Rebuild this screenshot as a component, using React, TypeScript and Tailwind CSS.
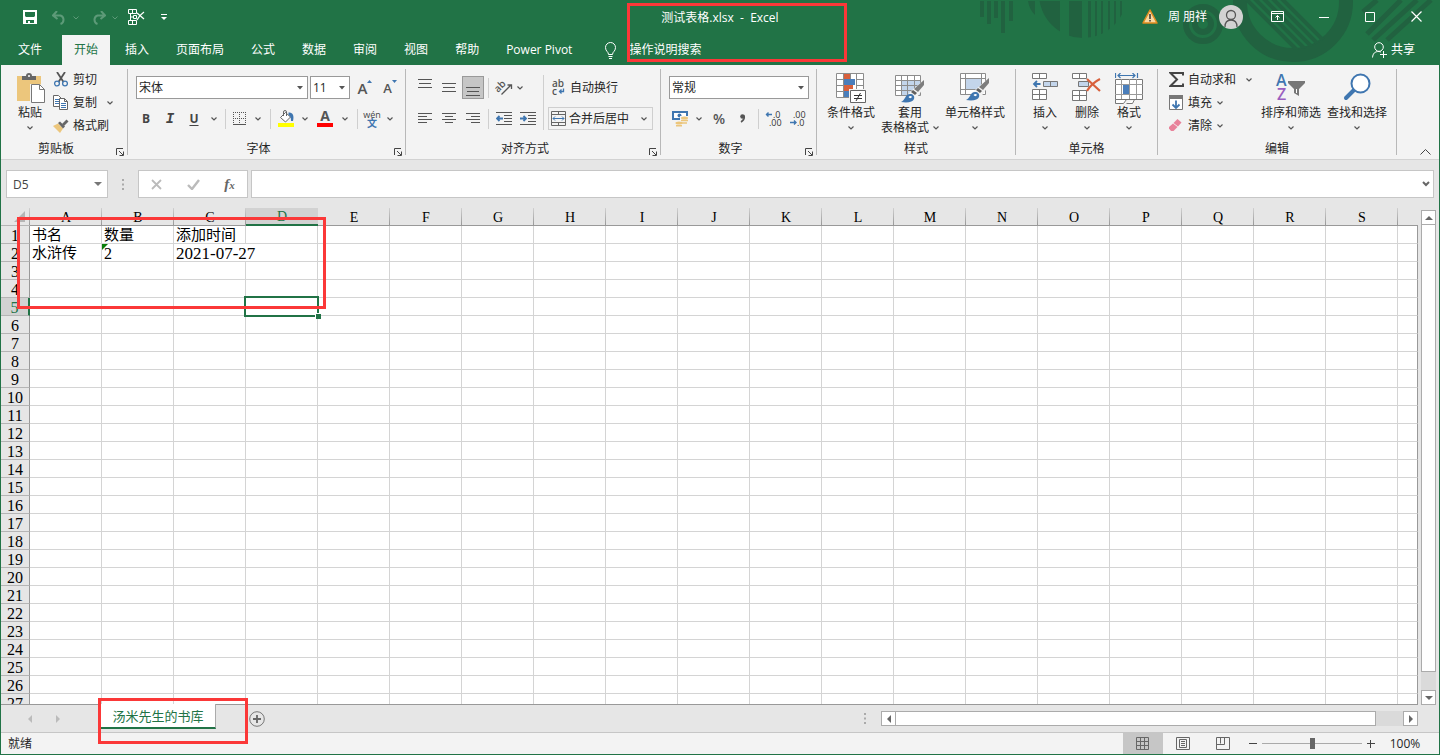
import type { ReactNode } from 'react';
import clsx from 'clsx';

const COLUMNS = 'ABCDEFGHIJKLMNOPQRS'.split('');
const ROWS = Array.from({ length: 27 }, (_, i) => i + 1);
const TABS = ['开始', '插入', '页面布局', '公式', '数据', '审阅', '视图', '帮助', 'Power Pivot'];

const CELLS: Record<string, string> = {
  A1: '书名',
  B1: '数量',
  C1: '添加时间',
  A2: '水浒传',
  B2: '2',
  C2: '2021-07-27',
};

type BoxProps = { w: number; h: number; children: ReactNode; className?: string };

function Icon({ w, h, children, className }: BoxProps) {
  return (
    <svg width={w} height={h} viewBox={`0 0 ${w} ${h}`} fill="none" className={clsx('shrink-0', className)} aria-hidden="true">
      {children}
    </svg>
  );
}

function Chevron({ className }: { className?: string }) {
  return (
    <Icon w={6} h={4} className={clsx('text-[#555]', className)}>
      <path d="M.5.5 3 3 5.5.5" stroke="currentColor" strokeWidth="1.2" />
    </Icon>
  );
}

function Tool({ label, className, children }: { label: string; className: string; children: ReactNode }) {
  return (
    <button type="button" aria-label={label} className={clsx('flex h-[23px] shrink-0 items-center justify-center', className)}>
      {children}
    </button>
  );
}

function More({ className = 'w-4' }: { className?: string }) {
  return (
    <Tool label="更多" className={className}>
      <Chevron />
    </Tool>
  );
}

function Divider({ className = 'mx-1' }: { className?: string }) {
  return <div className={clsx('h-5 w-px shrink-0 bg-[#cfcfcf]', className)} />;
}

function Group({ title, className, launcher, children }: { title: string; className: string; launcher?: boolean; children: ReactNode }) {
  return (
    <>
      <section className={clsx('flex shrink-0 flex-col', className)}>
        <div className="flex flex-1">{children}</div>
        <div className="mb-0.5 flex h-4 items-end">
          <h2 className="flex-1 text-center leading-4">{title}</h2>
          {launcher && (
            <button type="button" aria-label={`${title}设置`} className="w-4 pb-px pl-[5px]">
              <Icon w={8} h={8}>
                <path d="M.5 7V.5H7M3 3l4 4M7.5 3.5v4h-4" stroke="#444" />
              </Icon>
            </button>
          )}
        </div>
      </section>
      <div className="my-1 w-px shrink-0 bg-[#b8b8b8]" />
    </>
  );
}

function BigButton({ label, icon, className }: { label: string; icon: ReactNode; className: string }) {
  return (
    <button type="button" className={clsx('flex flex-col items-center pt-2', className)}>
      <span className="flex h-[33px] items-start">{icon}</span>
      <span className="leading-[14px] whitespace-nowrap">{label}</span>
      <Chevron className="mt-1.5" />
    </button>
  );
}

function SmallButton({ label, icon, more }: { label: string; icon: ReactNode; more?: string }) {
  return (
    <button type="button" className="flex h-[23px] items-center gap-1 whitespace-nowrap">
      <span className="flex w-4 justify-center">{icon}</span>
      {label}
      {more && <Chevron className={more} />}
    </button>
  );
}

function Dropdown({ label, value, className }: { label: string; value: string; className: string }) {
  return (
    <div className={clsx('relative shrink-0', className)}>
      <select aria-label={label} className="h-[23px] w-full appearance-none border border-[#999] bg-white pl-0.5 outline-none">
        <option>{value}</option>
      </select>
      <Icon w={7} h={4} className="pointer-events-none absolute top-2.5 right-1">
        <path d="M0 0h6L3 3.500z" fill="#555" />
      </Icon>
    </div>
  );
}

/* ---------- icons ---------- */

function Lines({ rows }: { rows: number[][] }) {
  return (
    <Icon w={15} h={15}>
      {rows.map(([y, x1, x2]) => (
        <path key={y} d={`M${x1} ${y}.5H${x2}`} stroke="#555" />
      ))}
    </Icon>
  );
}

function PasteIcon() {
  return (
    <Icon w={30} h={31}>
      <path d="M2 3h24v25H2z" fill="#ecc67c" />
      <path d="M7 7V3h4a3 3 0 0 1 6 0h4v4z" fill="#666" />
      <circle cx="14" cy="3" r="1" fill="#fff" />
      <path d="M15 11h10l5 5v14H15z" fill="#f3f3f3" />
      <path d="M16.500 11.500h8l5 5v13h-13z" fill="#fff" stroke="#777" />
      <path d="M24.500 11.500v5h5" stroke="#777" />
    </Icon>
  );
}

function CutIcon() {
  return (
    <Icon w={14} h={15}>
      <path d="M3 0l6.500 10M11 0 4.500 10" stroke="#555" strokeWidth="1.800" />
      <circle cx="3" cy="11.500" r="2.400" stroke="#3f76b0" strokeWidth="1.300" />
      <circle cx="11" cy="11.500" r="2.400" stroke="#3f76b0" strokeWidth="1.300" />
    </Icon>
  );
}

function CopyIcon() {
  return (
    <Icon w={16} h={15}>
      <path d="M.5.5h5l3 3v8h-8z" fill="#fff" stroke="#666" />
      <path d="M2 4.500h4M2 6.500h4M2 8.500h4" stroke="#3f76b0" />
      <path d="M6.500 3.500h5l3 3v8h-8z" fill="#fff" stroke="#666" />
      <path d="M11.500 3.500v3h3" stroke="#666" />
      <path d="M8 8.500h5M8 10.500h5M8 12.500h5" stroke="#3f76b0" />
    </Icon>
  );
}

function BrushIcon() {
  return (
    <Icon w={16} h={14}>
      <path d="M0 7l5-2.500 5 5L7 14z" fill="#ecc67c" />
      <path d="M5 4l2-1.500 5 5-2 2z" fill="#666" />
      <path d="M9 5l4.500-4.500 2 2L11 7z" fill="#666" />
    </Icon>
  );
}

function BordersIcon() {
  return (
    <Icon w={14} h={14}>
      <path d="M0 .5h13M0 6.500h13M.5 0v13M6.500 0v13M12.500 0v13" stroke="#555" strokeDasharray="1 1" />
      <path d="M0 12.500h13" stroke="#555" />
    </Icon>
  );
}

function FillIcon() {
  return (
    <Icon w={17} h={17}>
      <path d="M7.500 2.500 2.500 7.500l5 4.500 5-5z" fill="#fff" stroke="#666" />
      <path d="M5.500 6V2a1.500 1.500 0 0 1 3 0v4" stroke="#666" />
      <path d="M10.500 2.500c4 0 6 2.500 4.500 8.500h-2c0-3-.5-5-2.500-6z" fill="#3f76b0" />
      <path d="M0 13h16v4H0z" fill="#ff0" />
    </Icon>
  );
}

function OrientationIcon() {
  return (
    <svg width="17" height="17" viewBox="0 0 17 17" className="overflow-visible" aria-hidden="true">
      <text x="-1" y="11" transform="rotate(-45 4 9)" fontSize="10" fontWeight="600" fill="#555">ab</text>
      <path d="M5.500 15.500 15 6M11.500 6h4v4" fill="none" stroke="#555" strokeWidth="1.300" />
    </svg>
  );
}

function WrapIcon() {
  return (
    <svg width="14" height="17" viewBox="0 0 14 17" className="overflow-visible" aria-hidden="true">
      <text x="0" y="8" fontSize="10" fontWeight="600" fill="#555">ab</text>
      <text x="0" y="16" fontSize="10" fontWeight="600" fill="#555">c</text>
      <path d="M11.500 9.500v3H7.500M9.500 10.500l-2 2 2 2" fill="none" stroke="#3f76b0" strokeWidth="1.300" />
    </svg>
  );
}

function IndentIcon({ flip }: { flip?: boolean }) {
  return (
    <Icon w={16} h={14}>
      <path d="M0 .5h16M8 3.500h8M8 6.500h8M8 9.500h8M0 12.500h16" stroke="#555" />
      <path d={flip ? 'M0 6.500h6M3.500 4l2.500 2.500L3.500 9' : 'M1 6.500h6M3.500 4 1 6.500 3.500 9'} stroke="#3f76b0" strokeWidth="1.800" />
    </Icon>
  );
}

function MergeIcon() {
  return (
    <Icon w={15} h={15}>
      <path d="M.5.5h14v14H.5zM.5 3.500h14M.5 11.500h14M7.500 0v3M7.500 12v3" stroke="#666" />
      <path d="M2 7.500h11M4 5.500l-2 2 2 2M11 5.500l2 2-2 2" stroke="#3f76b0" />
    </Icon>
  );
}

function MoneyIcon() {
  return (
    <Icon w={16} h={16}>
      <path d="M0 0h16v9H0z" fill="#3f76b0" />
      <path d="M2 2h12v5H2z" fill="#fff" />
      <circle cx="7.500" cy="4.500" r="2" fill="#3f76b0" />
      <path d="M8 5h8v9H8zM3 10h8v6H3z" fill="#f3f3f3" />
      <ellipse cx="12.500" cy="7" rx="3.500" ry="1.500" fill="#ecc67c" />
      <path d="M9 9.500h7M9 12h6M4 14.800h6" stroke="#ecc67c" strokeWidth="1.500" />
      <ellipse cx="7" cy="12" rx="3.500" ry="1.500" fill="#ecc67c" />
    </Icon>
  );
}

function DecimalIcon({ more }: { more?: boolean }) {
  return (
    <svg width="16" height="16" viewBox="0 0 16 16" className="overflow-visible" aria-hidden="true">
      <text x={more ? 7 : 3} y="7" fontSize="9" fill="#333">{more ? '.0' : '.00'}</text>
      <text x={more ? 3 : 7} y="15" fontSize="9" fill="#333">{more ? '.00' : '.0'}</text>
      <path d={more ? 'M0 3.500h6M2.500 1.500l-2 2 2 2' : 'M0 11.500h6M4 9.500l2 2-2 2'} fill="none" stroke="#3f76b0" strokeWidth="1.400" />
    </svg>
  );
}

function ConditionalIcon() {
  return (
    <Icon w={30} h={31}>
      <path d="M.5.5h27v24H.5z" fill="#fff" />
      <path d="M8 0h6v6H8zM8 12h9v6H8z" fill="#d8603c" />
      <path d="M8 6h11v6H8zM8 18h5v6H8z" fill="#4a7ebb" />
      <path d="M.5.5h27v24H.5zM7.500 0v24M14.500 0v6M20.500 0v24M0 6.500h8M20 6.500h8M0 12.500h8M20 12.500h8M0 18.500h8" stroke="#8c8c8c" />
      <path d="M13 16h17v15H13z" fill="#f3f3f3" />
      <path d="M14.500 17.500h15v12h-15z" fill="#fff" stroke="#666" />
      <path d="M18 22.500h8M18 25.500h8M24.500 20l-4.500 8" stroke="#333" />
    </Icon>
  );
}

function Brush() {
  return (
    <>
      <path d="M30 6 15 19l-9 11h12l12-17z" fill="#f3f3f3" />
      <path d="M29 7v5l-6 7-4-3z" fill="#7d7d7d" />
      <path d="m18 17 4 3-2 2-4-3z" fill="#5f5f5f" />
      <path d="M6 29c4-1 4-8 9-8 3 0 5 2 4 5s-6 4-13 3z" fill="#3f76b0" />
      <path d="M13.500 24c1-1.500 3-1.500 3.500 0-1 1.500-2.500 1.500-3.500 0z" fill="#fff" />
    </>
  );
}

function TableStyleIcon() {
  return (
    <Icon w={30} h={30}>
      <path d="M.5 2.500h25v20H.5z" fill="#fff" />
      <path d="M7 8h18v14H7z" fill="#c3d5eb" />
      <path d="M.5 2.500h25v20H.5zM6.500 2v20M12.500 2v20M19.500 2v20M0 7.500h26M0 12.500h26M0 17.500h26" stroke="#8c8c8c" />
      <Brush />
    </Icon>
  );
}

function CellStyleIcon() {
  return (
    <Icon w={30} h={30}>
      <path d="M.5.5h25v21H.5z" fill="#fff" />
      <path d="M6 6h15v10H6z" fill="#c3d5eb" />
      <path d="M.5.5h25v21H.5zM5.500 0v22M21.500 0v22M0 5.500h26M0 16.500h26" stroke="#8c8c8c" />
      <g transform="translate(0 -2)">
        <Brush />
      </g>
    </Icon>
  );
}

function InsertIcon() {
  return (
    <Icon w={26} h={29}>
      <path d="M.5.5h14v5H.5zM7.500.5v5M.5 16.500h14v10H.5zM7.500 16.500v10M.5 21.500h14" fill="#fff" stroke="#777" />
      <path d="M11.500 8.500h14v5h-14zM18.500 8.500v5" fill="#c3d5eb" stroke="#777" />
      <path d="M1.500 11h7M5 8l-3 3 3 3" stroke="#3f76b0" strokeWidth="1.800" />
    </Icon>
  );
}

function DeleteIcon() {
  return (
    <Icon w={30} h={29}>
      <path d="M.5.5h14v5H.5zM7.500.5v5M.5 17.500h14v10H.5zM7.500 17.500v10M.5 22.500h14" fill="#fff" stroke="#777" />
      <path d="M6.500 8.500h10v5h-10z" fill="#c3d5eb" stroke="#777" />
      <path d="m15 6 13 12M28 6c-6 3-10 7-13 12" stroke="#d8603c" strokeWidth="2.200" />
    </Icon>
  );
}

function FormatIcon() {
  return (
    <Icon w={28} h={31}>
      <path d="M.5 0v5M22.500 0v5M3 2.500h17M5.500 0 3 2.500 5.500 5M17.500 0 20 2.500 17.500 5" stroke="#3f76b0" strokeWidth="1.200" />
      <path d="M.5 6.500h27v20H.5zM.5 26.500v4h8l3-4M11.500 30.500h6l2-4" fill="#fff" stroke="#777" />
      <path d="M6.500 6v20M14.500 6v20M21.500 6v20M0 11.500h28M0 21.500h28" stroke="#999" />
      <path d="M8 12h6v9H8z" fill="#4a7ebb" />
    </Icon>
  );
}

function SumIcon() {
  return (
    <Icon w={15} h={15}>
      <path d="M14 3.500V1H1.500L8 7.500 1.500 14H14v-2.500" stroke="#444" strokeWidth="2" />
    </Icon>
  );
}

function FillDownIcon() {
  return (
    <Icon w={15} h={16}>
      <path d="M.5.5h13v14H.5z" fill="#fff" stroke="#777" />
      <path d="M0 0h14v4H0z" fill="#777" />
      <path d="M7 5.500v7M3.500 9.500 7 13l3.500-3.500" stroke="#3f76b0" strokeWidth="1.800" />
    </Icon>
  );
}

function EraserIcon() {
  return (
    <Icon w={14} h={13}>
      <path d="m8.500 0 4 3.500L9 7.500 4.500 4z" fill="#e8829a" />
      <path d="m4 4.500 4.500 3.500L4.500 12H2L0 9.500V8z" fill="#e8829a" />
    </Icon>
  );
}

function SortIcon() {
  return (
    <svg width="30" height="30" viewBox="0 0 30 30" className="overflow-visible" aria-hidden="true">
      <text x="0" y="13" fontSize="16" fontWeight="600" fill="#3f76b0">A</text>
      <text x="1" y="27" fontSize="16" fontWeight="600" fill="#9a5fc0">Z</text>
      <path d="M12 8h17v2l-6 6v7l-5-3v-4l-6-6z" fill="#777" />
      <path d="M20.500 16v4" stroke="#fff" />
    </svg>
  );
}

function FindIcon() {
  return (
    <Icon w={28} h={28}>
      <path d="m11 17-8 8" stroke="#3f76b0" strokeWidth="4" strokeLinecap="round" />
      <circle cx="17.500" cy="10.500" r="9" fill="#fff" stroke="#3f76b0" strokeWidth="2" />
    </Icon>
  );
}

function Backdrop() {
  return (
    <svg width="460" height="64" viewBox="980 0 460 64" className="pointer-events-none absolute top-0 right-0" aria-hidden="true">
      <defs>
        <clipPath id="dome">
          <circle cx="1084" cy="-6" r="44" />
        </clipPath>
        <clipPath id="bowl">
          <circle cx="1294" cy="2" r="48" />
        </clipPath>
      </defs>
      <g fill="#216240">
        <path d="M981 1h4v16h-4zM988 1h4v23h-4zM995 1h4v17h-4zM1002 1h4v32h-4zM1010 1h4v20h-4zM1029 1h7v14c-4-4-6-8-7-14z" />
        <g clipPath="url(#dome)">
          <path d="M1040 1h21v40h-21zM1070 1h13v40h-13zM1089 1h3v40h-3zM1096 1h2v40h-2zM1102 1h2v40h-2zM1109 1h2v40h-2zM1115 1h2v40h-2zM1121 1h2v40h-2z" />
        </g>
      </g>
      <g fill="none" stroke="#216240">
        <circle cx="1204" cy="24" r="17" strokeWidth="6" />
        <circle cx="1204" cy="24" r="8" strokeWidth="6" />
        <circle cx="1294" cy="2" r="53" strokeWidth="14" />
        <g clipPath="url(#bowl)" strokeWidth="4">
          <path d="m1242-6 60 60M1251-6l60 60M1260-6l60 60M1269-6l60 60M1278-6l60 60" />
        </g>
        <path d="m1364 12 14-12M1368 34l34-34M1374 40l44-40M1388 40l44-40" strokeWidth="5" />
      </g>
    </svg>
  );
}

/* ---------- title bar and tabs ---------- */

function Header() {
  return (
    <header className="relative h-[65px] shrink-0 bg-[#217346] text-white">
      <Backdrop />
      <div className="relative grid h-[35px] grid-cols-[1fr_auto_1fr] items-center">
        <div className="flex items-center pl-[22px]">
          <button type="button" aria-label="保存">
            <Icon w={15} h={15}>
              <path d="M0 0h14v14H0zM2 2v4l1 1h8l1-1V2zM3 10v3h2v-2h2v2h4v-3z" fill="#fff" fillRule="evenodd" />
            </Icon>
          </button>
          <button type="button" aria-label="撤消" className="ml-3.5 flex items-center gap-1.5 text-[#5d9a78]">
            <Icon w={15} h={14}>
              <path d="M5 0 1 4.500 5.500 8M1 4.500h7.500a4.500 4.500 0 0 1 0 8.500" stroke="currentColor" strokeWidth="2" />
            </Icon>
            <Icon w={6} h={4}>
              <path d="M.5.5 3 3 5.500.5" stroke="currentColor" />
            </Icon>
          </button>
          <button type="button" aria-label="恢复" className="ml-3 flex items-center gap-1.5 text-[#5d9a78]">
            <Icon w={15} h={14}>
              <path d="m10 0 4 4.500L9.500 8M14 4.500H6.500a4.500 4.500 0 0 0 0 8.500" stroke="currentColor" strokeWidth="2" />
            </Icon>
            <Icon w={6} h={4}>
              <path d="M.5.5 3 3 5.500.5" stroke="currentColor" />
            </Icon>
          </button>
          <button type="button" aria-label="删除表格" className="ml-2.5">
            <Icon w={17} h={17}>
              <path d="M.5.500h8v4h-8zM4.500.5v4M2.500 5v6M2.500 8h3M5.500 6.500h3v3h-3zM.5 11.500h8v4h-8zM4.500 11.500v4" stroke="#fff" />
              <path d="m9 4 7 6M16 3c-3 2-5 4-7 8" stroke="#fff" strokeWidth="1.300" />
            </Icon>
          </button>
          <button type="button" aria-label="自定义快速访问工具栏" className="ml-4">
            <Icon w={6} h={7}>
              <path d="M0 .500h6" stroke="#fff" />
              <path d="M0 3h6L3 6z" fill="#fff" />
            </Icon>
          </button>
        </div>
        <h1 className="whitespace-pre">测试表格.xlsx  -  Excel</h1>
        <div className="flex items-center justify-end pr-4 pb-0.5">
          <Icon w={16} h={15}>
            <path d="M8 1 15 14H1z" fill="#f9d9a0" stroke="#e08a1e" strokeWidth="1.500" strokeLinejoin="round" />
            <path d="M8 5v5M8 11v1.500" stroke="#333" strokeWidth="1.500" />
          </Icon>
          <span className="ml-2.5">周 朋祥</span>
          <button type="button" aria-label="账户" className="ml-3 flex size-6 items-end justify-center overflow-hidden rounded-full bg-[#d2d2d2]">
            <Icon w={16} h={20}>
              <circle cx="8" cy="6" r="4.500" stroke="#555" strokeWidth="1.300" />
              <path d="M2 18c0-4 2-7 6-7s6 3 6 7" stroke="#555" strokeWidth="1.300" />
            </Icon>
          </button>
          <button type="button" aria-label="功能区显示选项" className="ml-7">
            <Icon w={14} h={12}>
              <path d="M.5.5h12v10H.5zM.5 2.500h12M6.500 9V4.500M4.500 6.500l2-2 2 2" stroke="#fff" />
            </Icon>
          </button>
          <button type="button" aria-label="最小化" className="ml-[34px] w-3">
            <Icon w={10} h={10}>
              <path d="M0 5.500h10" stroke="#fff" />
            </Icon>
          </button>
          <button type="button" aria-label="最大化" className="ml-[34px] w-3">
            <Icon w={11} h={10}>
              <path d="M.5.5h9v9h-9z" stroke="#fff" />
            </Icon>
          </button>
          <button type="button" aria-label="关闭" className="ml-[34px] w-3">
            <Icon w={11} h={11}>
              <path d="m.5.5 10 10M10.500.5l-10 10" stroke="#fff" strokeWidth="1.200" />
            </Icon>
          </button>
        </div>
      </div>
      <nav className="relative flex h-[30px] items-center pl-[5px]">
        <button type="button" className="mr-2 h-full px-3 pb-px">文件</button>
        <div className="flex h-full gap-[3px]">
          {TABS.map((tab, i) => (
            <button
              type="button"
              key={tab}
              className={clsx('px-3 pb-px whitespace-nowrap', i === 0 && 'bg-[#f3f3f3] text-[#217346]')}
            >
              {tab}
            </button>
          ))}
        </div>
        <button type="button" className="ml-5 flex items-center gap-3">
          <Icon w={13} h={17}>
            <path d="M4.500 12.500c0-3-3-3-3-7a5 5 0 0 1 10 0c0 4-3 4-3 7zM4.500 14.500h4M5 16.500h3" stroke="#fff" />
          </Icon>
          <span className="pb-px">操作说明搜索</span>
        </button>
        <button type="button" className="mr-6 ml-auto flex items-center gap-1">
          <Icon w={15} h={16}>
            <circle cx="7" cy="5" r="4.300" stroke="#fff" />
            <path d="M.5 15.500c.5-4 2-6 6.500-6l2 .5M8 12.500h7M11.500 9v7" stroke="#fff" />
          </Icon>
          <span className="pb-px">共享</span>
        </button>
      </nav>
      <div className="pointer-events-none absolute top-[3px] left-1/2 -ml-[93px] h-[59px] w-[220px] border-3 border-[#fb3838]" />
    </header>
  );
}

/* ---------- ribbon ---------- */

function Ribbon() {
  return (
    <div className="flex h-[95px] shrink-0 border-b border-[#d2d2d2] bg-[#f3f3f3]">
      <Group title="剪贴板" className="w-[126px]" launcher>
        <BigButton label="粘贴" icon={<PasteIcon />} className="ml-3.5 w-[30px]" />
        <div className="ml-2 flex flex-col pt-[3px]">
          <SmallButton label="剪切" icon={<CutIcon />} />
          <SmallButton label="复制" icon={<CopyIcon />} more="ml-1.5" />
          <SmallButton label="格式刷" icon={<BrushIcon />} />
        </div>
      </Group>

      <Group title="字体" className="w-[277px]" launcher>
        <div className="flex flex-col gap-2 pt-[11px]">
          <div className="flex gap-0.5 pl-2">
            <Dropdown label="字体" value="宋体" className="w-[172px]" />
            <Dropdown label="字号" value="11" className="w-10" />
            <Tool label="增大字号" className="w-6 pl-0.5">
              <span className="text-[15px] font-semibold text-[#555]">A</span>
              <Icon w={5} h={3} className="mb-3">
                <path d="M0 3h5L2.500 0z" fill="#3f76b0" />
              </Icon>
            </Tool>
            <Tool label="减小字号" className="w-6">
              <span className="text-[13px] font-semibold text-[#555]">A</span>
              <Icon w={5} h={3} className="mb-3">
                <path d="M0 0h5L2.500 3z" fill="#3f76b0" />
              </Icon>
            </Tool>
          </div>
          <div className="flex items-center pl-1.5 text-[#444]">
            <Tool label="加粗" className="w-6 font-bold">B</Tool>
            <Tool label="倾斜" className="w-6 font-['Liberation_Mono'] text-[14px] font-bold italic">I</Tool>
            <Tool label="下划线" className="w-6 font-bold underline underline-offset-2">U</Tool>
            <More />
            <Divider className="mr-1 ml-[3px]" />
            <Tool label="边框" className="w-5"><BordersIcon /></Tool>
            <More />
            <Divider />
            <Tool label="填充颜色" className="w-[22px]"><FillIcon /></Tool>
            <More />
            <Tool label="字体颜色" className="w-6">
              <span className="flex flex-col items-center">
                <span className="text-[14px] leading-3 font-bold text-[#555]">A</span>
                <span className="mt-px h-1 w-4 bg-[#f00]" />
              </span>
            </Tool>
            <More />
            <Divider />
            <Tool label="拼音指南" className="w-5">
              <span className="flex flex-col items-center">
                <span className="text-[9px] leading-2">wén</span>
                <span className="text-[10px] leading-2 font-bold text-[#3f76b0]">文</span>
              </span>
            </Tool>
            <More />
          </div>
        </div>
      </Group>

      <Group title="对齐方式" className="w-[254px]" launcher>
        <div className="flex flex-col gap-2 pt-[11px] pl-[7px]">
          <div className="flex items-center">
            <Tool label="顶端对齐" className="w-6 pb-2"><Lines rows={[[3, 0, 14], [7, 1, 13], [11, 0, 14]]} /></Tool>
            <Tool label="垂直居中" className="w-6"><Lines rows={[[3, 0, 14], [7, 1, 13], [11, 0, 14]]} /></Tool>
            <Tool label="底端对齐" className="mx-px w-[22px] border border-[#999] bg-[#c6c6c6] pt-2">
              <Lines rows={[[3, 0, 14], [7, 1, 13], [11, 0, 14]]} />
            </Tool>
            <Divider className="mx-[3px]" />
            <Tool label="方向" className="w-6"><OrientationIcon /></Tool>
            <More className="w-2" />
          </div>
          <div className="flex items-center">
            <Tool label="左对齐" className="w-6"><Lines rows={[[2, 0, 14], [5, 0, 9], [8, 0, 14], [11, 0, 9]]} /></Tool>
            <Tool label="居中" className="w-6"><Lines rows={[[2, 0, 14], [5, 3, 11], [8, 0, 14], [11, 3, 11]]} /></Tool>
            <Tool label="右对齐" className="w-6"><Lines rows={[[2, 0, 14], [5, 5, 14], [8, 0, 14], [11, 5, 14]]} /></Tool>
            <Divider className="mx-[3px]" />
            <Tool label="减少缩进量" className="w-6"><IndentIcon /></Tool>
            <Tool label="增加缩进量" className="w-6"><IndentIcon flip /></Tool>
          </div>
        </div>
        <div className="mx-[3px] mt-2.5 h-[55px] w-px bg-[#cfcfcf]" />
        <div className="ml-px flex flex-col gap-2 pt-[11px]">
          <button type="button" className="flex h-[23px] items-center gap-1 pl-1 whitespace-nowrap">
            <WrapIcon />
            自动换行
          </button>
          <button type="button" className="flex h-[23px] w-[105px] items-center gap-[3px] border border-[#cfcfcf] pl-0.5 whitespace-nowrap">
            <MergeIcon />
            合并后居中
            <Chevron className="mr-[5px] ml-auto" />
          </button>
        </div>
      </Group>

      <Group title="数字" className="w-[155px]" launcher>
        <div className="flex flex-col gap-2 pt-[11px] pl-2">
          <Dropdown label="数字格式" value="常规" className="w-[140px]" />
          <div className="flex items-center text-[#555]">
            <Tool label="会计数字格式" className="w-[22px]"><MoneyIcon /></Tool>
            <More />
            <Tool label="百分比样式" className="w-6 text-[14px] font-semibold">%</Tool>
            <Tool label="千位分隔样式" className="w-6">
              <Icon w={6} h={9}>
                <circle cx="2.500" cy="2.500" r="2.300" fill="#555" />
                <path d="M4 1.500c1 3-.5 5-3 6.500" stroke="#555" strokeWidth="1.500" />
              </Icon>
            </Tool>
            <Divider className="mx-[3px]" />
            <Tool label="增加小数位数" className="w-6"><DecimalIcon more /></Tool>
            <Tool label="减少小数位数" className="w-6"><DecimalIcon /></Tool>
          </div>
        </div>
      </Group>

      <Group title="样式" className="w-[198px]">
        <div className="flex gap-0.5 pl-2">
          <BigButton label="条件格式" icon={<ConditionalIcon />} className="w-[52px]" />
          <button type="button" className="flex w-[62px] flex-col items-center pt-2">
            <span className="flex h-[33px] items-start"><TableStyleIcon /></span>
            <span className="leading-[14px]">套用</span>
            <span className="flex items-center gap-1 leading-4 whitespace-nowrap">
              表格格式
              <Chevron />
            </span>
          </button>
          <BigButton label="单元格样式" icon={<CellStyleIcon />} className="w-16" />
        </div>
      </Group>

      <Group title="单元格" className="w-[141px]">
        <div className="flex pl-2">
          <BigButton label="插入" icon={<InsertIcon />} className="w-[42px]" />
          <BigButton label="删除" icon={<DeleteIcon />} className="w-[42px]" />
          <BigButton label="格式" icon={<FormatIcon />} className="w-[42px]" />
        </div>
      </Group>

      <Group title="编辑" className="w-[238px]">
        <div className="flex w-[100px] flex-col items-start pt-[3px] pl-2.5">
          <SmallButton label="自动求和" icon={<SumIcon />} more="ml-1.5" />
          <SmallButton label="填充" icon={<FillDownIcon />} more="ml-px" />
          <SmallButton label="清除" icon={<EraserIcon />} more="ml-px" />
        </div>
        <BigButton label="排序和筛选" icon={<SortIcon />} className="w-[66px]" />
        <BigButton label="查找和选择" icon={<FindIcon />} className="w-[66px]" />
      </Group>

      <button type="button" aria-label="折叠功能区" className="mr-2 mb-1 ml-auto self-end">
        <Icon w={11} h={6}>
          <path d="m.5 5.500 5-5 5 5" stroke="#444" />
        </Icon>
      </button>
    </div>
  );
}

function FormulaBar() {
  return (
    <div className="flex h-12 shrink-0 items-center px-[5px]">
      <div className="relative w-[102px]">
        <input aria-label="名称框" defaultValue="D5" className="h-7 w-full border border-[#c6c6c6] bg-white pl-1.5 text-[#444] outline-none" />
        <Icon w={8} h={4} className="pointer-events-none absolute top-3 right-1.5">
          <path d="M0 0h8L4 4z" fill="#777" />
        </Icon>
      </div>
      <div className="flex w-[30px] justify-center">
        <Icon w={2} h={11}>
          <path d="M0 0h2v2H0zM0 4.500h2v2H0zM0 9h2v2H0z" fill="#aaa" />
        </Icon>
      </div>
      <div className="mr-[3px] flex h-7 w-[110px] items-center justify-around border border-[#c6c6c6] bg-white">
        <button type="button" aria-label="取消">
          <Icon w={11} h={11}>
            <path d="m1 1 9 9M10 1l-9 9" stroke="#bbb" strokeWidth="1.800" />
          </Icon>
        </button>
        <button type="button" aria-label="输入">
          <Icon w={13} h={11}>
            <path d="m1 6 4 4 7-9" stroke="#bbb" strokeWidth="2.400" />
          </Icon>
        </button>
        <button type="button" aria-label="插入函数" className="font-['Liberation_Serif'] text-[15px] leading-4 font-bold text-[#666] italic">
          f<span className="text-[11px]">x</span>
        </button>
      </div>
      <div className="relative flex-1">
        <input aria-label="编辑栏" className="h-7 w-full border border-[#c6c6c6] bg-white pr-5 pl-1.5 outline-none" />
        <Icon w={8} h={6} className="pointer-events-none absolute top-[11px] right-1">
          <path d="m1 1 3 3 3-3" stroke="#666" strokeWidth="2" />
        </Icon>
      </div>
    </div>
  );
}

/* ---------- worksheet ---------- */

function Grid() {
  return (
    <div className="min-w-0 flex-1 overflow-hidden border-b border-[#999]">
      <table className="w-full table-fixed border-separate border-spacing-0 font-['Liberation_Serif','Noto_Sans_CJK_SC',serif] text-black">
        <colgroup>
          <col className="w-[29px]" />
          {COLUMNS.map((c) => (
            <col key={c} className="w-[72px]" />
          ))}
          <col />
        </colgroup>
        <thead>
          <tr className="h-[18px] text-[14px] leading-[14px]">
            <th className="border-b border-[#b5b5b5] bg-[linear-gradient(#d0d0d0,#999)] bg-[length:1px_100%] bg-right bg-no-repeat p-0">
              <Icon w={12} h={11} className="mr-1 ml-auto block">
                <path d="M11 0v11H0z" fill="#b5b5b5" />
              </Icon>
            </th>
            {COLUMNS.map((c) => (
              <th
                key={c}
                scope="col"
                className={clsx(
                  'bg-[length:1px_100%] bg-right bg-no-repeat p-0 font-normal',
                  c === 'D'
                    ? 'border-b-2 border-[#217346] bg-[#d2d2d2] pt-0.5 text-[#217346]'
                    : 'border-b border-[#999] bg-[linear-gradient(#d0d0d0,#999)] pt-[3px]'
                )}
              >
                {c}
              </th>
            ))}
            <th className="border-b border-[#999] p-0" />
          </tr>
        </thead>
        <tbody>
          {ROWS.map((r) => (
            <tr key={r} className="h-[18px] leading-[15px]">
              <th
                scope="row"
                className={clsx(
                  'p-0 pt-0.5 text-[16px] font-normal',
                  r === 5
                    ? 'border-r-2 border-b border-r-[#217346] border-b-[#b5b5b5] bg-[#d2d2d2] text-[#217346]'
                    : 'border-r border-b border-r-[#999] border-b-[#b5b5b5]'
                )}
              >
                {r}
              </th>
              {COLUMNS.map((c) => {
                const id = c + r;
                return (
                  <td
                    key={c}
                    className={clsx(
                      'relative border-b border-[#d4d4d4] bg-white p-0 pt-0.5 pl-0.5 whitespace-nowrap',
                      id === 'C2' ? 'z-10 text-[17px]' : 'border-r',
                      id === 'B2' && 'text-[16px]',
                      id !== 'C2' && id !== 'B2' && 'text-[15px]',
                      id === 'D5' && 'z-20'
                    )}
                  >
                    {CELLS[id]}
                    {id === 'B2' && (
                      <Icon w={6} h={6} className="absolute top-0 left-0">
                        <path d="M0 0h6L0 6z" fill="#0a7d0a" />
                      </Icon>
                    )}
                    {id === 'D5' && (
                      <>
                        <span className="absolute -inset-0.5 border-2 border-[#217346]" />
                        <span className="absolute -right-1 -bottom-1 size-1.5 border-t border-l border-white bg-[#217346]" />
                      </>
                    )}
                  </td>
                );
              })}
              <td className="border-r border-b border-r-[#999] border-b-[#d4d4d4] bg-white p-0" />
            </tr>
          ))}
        </tbody>
      </table>
    </div>
  );
}

function ScrollButton({ label, d, className }: { label: string; d: string; className?: string }) {
  return (
    <button type="button" aria-label={label} className={clsx('flex size-[15px] shrink-0 items-center justify-center border border-[#ababab] bg-white', className)}>
      <Icon w={8} h={8}>
        <path d={d} fill="#666" />
      </Icon>
    </button>
  );
}

function Sheet() {
  return (
    <main className="flex min-h-0 flex-1">
      <Grid />
      <div className="mx-[3px] mt-0.5 flex flex-col bg-[#dadada]">
        <ScrollButton label="向上滚动" d="M0 6h8L4 2z" />
        <div className="-mt-px mb-[18px] flex-1 border border-[#ababab] bg-white" />
        <ScrollButton label="向下滚动" d="M0 2h8L4 6z" />
      </div>
    </main>
  );
}

function SheetTabs() {
  return (
    <div className="flex h-7 shrink-0 border-b border-[#c6c6c6]">
      <div className="flex w-[100px] items-center gap-[22px] pl-[26px]">
        <button type="button" aria-label="上一个工作表">
          <Icon w={6} h={8}>
            <path d="M5 0v8L1 4z" fill="#bbb" />
          </Icon>
        </button>
        <button type="button" aria-label="下一个工作表">
          <Icon w={6} h={8}>
            <path d="M1 0v8l4-4z" fill="#bbb" />
          </Icon>
        </button>
      </div>
      <button type="button" className="-mt-px mb-[3px] w-[115px] border-r border-b-2 border-r-[#ababab] border-b-[#217346] bg-white text-[13px] text-[#217346]">
        汤米先生的书库
      </button>
      <button type="button" aria-label="新工作表" className="ml-[33px]">
        <Icon w={16} h={16}>
          <circle cx="8" cy="8" r="7.300" stroke="#777" />
          <path d="M8 4v8M4 8h8" stroke="#666" strokeWidth="1.800" />
        </Icon>
      </button>
      <div className="ml-auto flex items-center">
        <Icon w={2} h={11} className="mr-[15px]">
          <path d="M0 0h2v2H0zM0 4.500h2v2H0zM0 9h2v2H0z" fill="#aaa" />
        </Icon>
        <div className="mr-[21px] flex w-[537px] bg-[#dadada]">
          <ScrollButton label="向左滚动" d="M6 0v8L2 4z" />
          <div className="-ml-px mr-[27px] flex-1 border border-[#ababab] bg-white" />
          <ScrollButton label="向右滚动" d="M2 0v8l4-4z" />
        </div>
      </div>
    </div>
  );
}

function StatusBar() {
  return (
    <footer className="flex h-[21px] shrink-0 items-center bg-[#f3f3f3] pl-[7px]">
      <span>就绪</span>
      <div className="ml-auto flex h-full items-center">
        <button type="button" aria-label="普通" className="flex h-full w-10 items-center justify-center bg-[#c6c6c6]">
          <Icon w={14} h={13}>
            <path d="M.5.5h12v12H.5zM.5 4.500h12M.5 8.500h12M4.500.5v12M8.500.5v12" stroke="#666" />
          </Icon>
        </button>
        <button type="button" aria-label="页面布局视图" className="flex w-10 justify-center">
          <Icon w={14} h={13}>
            <path d="M.5.5h13v12H.5zM3.500 2.500h7v8h-7zM5 4.500h4M5 6.500h4M5 8.500h4" stroke="#666" />
          </Icon>
        </button>
        <button type="button" aria-label="分页预览" className="flex w-10 justify-center">
          <Icon w={14} h={13}>
            <path d="M.5.5h13v12H.5zM4.500.5v6M.5 7.500h8v-7" stroke="#666" />
          </Icon>
        </button>
        <button type="button" aria-label="缩小" className="ml-1.5">
          <Icon w={8} h={8}>
            <path d="M0 3.500h8" stroke="#444" />
          </Icon>
        </button>
        <input
          type="range"
          aria-label="显示比例"
          defaultValue={50}
          className="mx-[5px] h-3 w-[100px] appearance-none bg-[linear-gradient(#aaa,#aaa)] bg-[length:100%_1px] bg-center bg-no-repeat [&::-webkit-slider-thumb]:h-[11px] [&::-webkit-slider-thumb]:w-[5px] [&::-webkit-slider-thumb]:appearance-none [&::-webkit-slider-thumb]:bg-[#666]"
        />
        <button type="button" aria-label="放大">
          <Icon w={8} h={8}>
            <path d="M0 3.500h8M3.500 0v8" stroke="#444" />
          </Icon>
        </button>
        <button type="button" className="w-16 pr-1 text-center">100%</button>
      </div>
    </footer>
  );
}

export default function App() {
  return (
    <div className="relative flex h-screen flex-col overflow-hidden border-x border-b border-[#217346] bg-[#e6e6e6] font-['Open_Sans','Noto_Sans_CJK_SC',sans-serif] text-[12px] leading-4 text-[#262626]">
      <Header />
      <Ribbon />
      <FormulaBar />
      <Sheet />
      <SheetTabs />
      <StatusBar />
      {/* highlight frames */}
      <div className="pointer-events-none absolute top-[217px] left-4 z-30 h-[92px] w-[309px] border-3 border-[#fb3838]" />
      <div className="pointer-events-none absolute bottom-2.5 left-[97px] z-30 h-[46px] w-[150px] border-3 border-[#fb3838]" />
    </div>
  );
}
